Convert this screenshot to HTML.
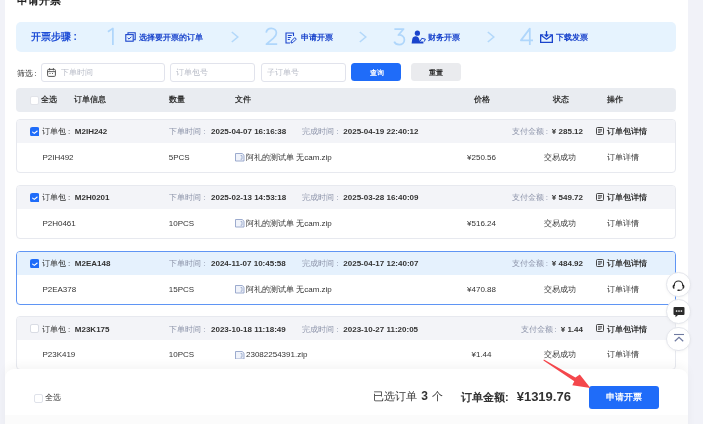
<!DOCTYPE html>
<html><head><meta charset="utf-8">
<style>
*{box-sizing:border-box;margin:0;padding:0}
html,body{width:703px;height:424px;overflow:hidden;background:#f1f2f8;font-family:"Liberation Sans",sans-serif;color:#333}
.a{position:absolute;white-space:nowrap}
#main{position:absolute;left:5px;top:0;width:683px;height:424px;background:#fff}
.t8{font-size:8px;line-height:10px}
.b{font-weight:bold}
.steps{position:absolute;left:16px;top:22px;width:660px;height:30px;background:#e6f3fe;border-radius:5px}
.num{position:absolute;font-size:21px;line-height:21px;color:#bcdcf8;font-weight:300}
.chev{position:absolute;top:31px;width:8px;height:12px}
.stxt{color:#1a44cc;font-weight:bold;font-size:8.3px;line-height:10px}
.inp{position:absolute;top:63px;height:19px;border:1px solid #e1e3ec;border-radius:3px;background:#fff}
.ph{color:#b9bdc8;font-size:8px;line-height:10px}
.card{position:absolute;left:16px;width:660px;height:54px;border:1px solid #e7e9ef;border-radius:4px;background:#fff;overflow:hidden}
.card .hd{position:absolute;left:0;top:0;right:0;height:22.8px;background:#f3f4f8}
.card.sel{border-color:#5f95f4}
.card.sel .hd{background:#e5f1fd}
.cb{position:absolute;width:9px;height:9px;border-radius:2px}
.cb.on{background:#1f6cf9}
.cb.off{background:#fff;border:1px solid #d9dce4}
.gl{color:#8d94aa}
</style></head><body><div style="position:absolute;left:0;top:0;width:703px;height:424px;will-change:transform">
<div id="main"></div>
<!-- title -->
<div class="a b" style="left:17px;top:-6.4px;font-size:10.5px;line-height:12px;color:#222">申请开票</div>

<!-- steps -->
<div class="steps"></div>
<div class="a b" style="left:31px;top:31px;font-size:10px;line-height:12px;color:#1c4cd6">开票步骤<span style="margin-left:2.5px">:</span></div>
<svg class="a" style="left:0;top:0" width="703" height="60" viewBox="0 0 703 60"><g fill="none" stroke="#afd6fb" stroke-width="1.75" stroke-linejoin="round" stroke-linecap="butt">
<path d="M107.9 31.8L112.9 28.4V44.9"/>
<path d="M266.2 32.6C266.6 29.8 268.6 28.3 271.3 28.3C274.3 28.3 276.4 30.3 276.4 32.9C276.4 35.1 275.2 36.6 273.2 38.4L266.4 44.2H277.2"/>
<path d="M394.4 29H403.6L398.4 35C401.9 34.7 404.4 36.8 404.4 39.7C404.4 42.7 402.1 44.6 399.2 44.6C396.8 44.6 395 43.5 394.2 41.6"/>
<path d="M529.8 44.9V28.6L520.9 40.4H533"/>
</g></svg>
<svg class="chev" style="left:231px" viewBox="0 0 8 12"><path d="M0.8 1l6 5-6 5" fill="none" stroke="#b3d8fa" stroke-width="1.6"/></svg>
<svg class="chev" style="left:359px" viewBox="0 0 8 12"><path d="M0.8 1l6 5-6 5" fill="none" stroke="#b3d8fa" stroke-width="1.6"/></svg>
<svg class="chev" style="left:487px" viewBox="0 0 8 12"><path d="M0.8 1l6 5-6 5" fill="none" stroke="#b3d8fa" stroke-width="1.6"/></svg>
<!-- icon1 copy-check -->
<svg class="a" style="left:125px;top:32px" width="11" height="10" viewBox="0 0 11 10"><path d="M3 2.5V0.8h7.2v7H8.5" fill="none" stroke="#1a44cc" stroke-width="1.1"/><rect x="0.8" y="2.6" width="7.4" height="6.6" fill="none" stroke="#1a44cc" stroke-width="1.1"/><path d="M2.6 5.8l1.4 1.3 2.4-2.4" fill="none" stroke="#1a44cc" stroke-width="1"/></svg>
<div class="a stxt" style="left:139px;top:32.3px">选择要开票的订单</div>
<!-- icon2 doc edit -->
<svg class="a" style="left:285px;top:31.5px" width="12" height="12" viewBox="0 0 12 12"><path d="M8.5 4V1H1v10h4" fill="none" stroke="#1a44cc" stroke-width="1.1"/><path d="M2.8 3.5h4M2.8 5.5h3M2.8 7.5h2" stroke="#1a44cc" stroke-width="1"/><path d="M6 11l0.4-2 3.4-3.4 1.5 1.5-3.4 3.4z" fill="none" stroke="#1a44cc" stroke-width="1"/></svg>
<div class="a stxt" style="left:301px;top:32.3px">申请开票</div>
<!-- icon3 person -->
<svg class="a" style="left:411px;top:30px" width="15" height="14" viewBox="0 0 15 14"><circle cx="6.4" cy="3.2" r="2.6" fill="#1a44cc"/><path d="M0.6 13.6L1.3 9C1.6 7.2 3 6.2 4.8 6.2 6.5 6.2 7.6 7.2 8 8.8L9 11.4H12.4V13.6z" fill="#1a44cc"/><path d="M9.3 11L10.8 8.3 14.4 9.2 13.2 11.6" fill="none" stroke="#1a44cc" stroke-width="1"/></svg>
<div class="a stxt" style="left:428px;top:32.3px">财务开票</div>
<!-- icon4 inbox download -->
<svg class="a" style="left:540px;top:31px" width="13" height="12" viewBox="0 0 13 12"><path d="M3.4 3.85H0.65V11.35H12.35V3.85H9.6" fill="none" stroke="#1a44cc" stroke-width="1.3"/><path d="M1 4.3L6.5 8.3 12 4.3" fill="none" stroke="#1a44cc" stroke-width="1.2"/><path d="M6.5 0v5.3M4.6 3.5l1.9 1.9 1.9-1.9" fill="none" stroke="#1a44cc" stroke-width="1.3"/></svg>
<div class="a stxt" style="left:556px;top:32.3px">下载发票</div>

<!-- filter -->
<div class="a t8" style="left:16.7px;top:68.6px;color:#2e2e2e">筛选<span style="margin-left:1.5px">:</span></div>
<div class="inp" style="left:41px;width:123.5px"></div>
<svg class="a" style="left:47px;top:68px" width="9" height="9" viewBox="0 0 9 9"><rect x="0.6" y="1.4" width="7.8" height="7" rx="1" fill="none" stroke="#555" stroke-width="1"/><path d="M0.6 3.6h7.8M2.6 0v2.4M6.4 0v2.4M2.5 5.5h1M5 5.5h1" stroke="#555" stroke-width="0.9"/></svg>
<div class="a ph" style="left:60.5px;top:68px">下单时间</div>
<div class="inp" style="left:170px;width:85px"></div>
<div class="a ph" style="left:176px;top:68px">订单包号</div>
<div class="inp" style="left:261px;width:85px"></div>
<div class="a ph" style="left:267px;top:68px">子订单号</div>
<div class="a" style="left:351.3px;top:63px;width:50.2px;height:18px;background:#1f6cf9;border-radius:3.5px"></div>
<div class="a b" style="left:369.5px;top:67.6px;font-size:7px;line-height:10px;color:#fff">查询</div>
<div class="a" style="left:410.8px;top:63px;width:50px;height:18px;background:#eaebee;border-radius:3.5px"></div>
<div class="a b" style="left:428.5px;top:67.6px;font-size:7px;line-height:10px;color:#2a2a2a">重置</div>

<!-- table header -->
<div class="a" style="left:16px;top:88px;width:660px;height:23.5px;background:#e9ecf1;border-radius:4px"></div>
<div class="cb off" style="left:29.8px;top:96px;border-color:#e1e3e9"></div>
<div class="a t8 b" style="left:41px;top:95px">全选</div>
<div class="a t8 b" style="left:73.5px;top:95px">订单信息</div>
<div class="a t8 b" style="left:169px;top:95px">数量</div>
<div class="a t8 b" style="left:235px;top:95px">文件</div>
<div class="a t8 b" style="left:473.5px;top:95px">价格</div>
<div class="a t8 b" style="left:552.5px;top:95px">状态</div>
<div class="a t8 b" style="left:607px;top:95px">操作</div>

<!--CARDS-->
<div class="card" style="top:119px"><div class="hd"></div></div>
<svg class="a" style="left:29.6px;top:126.9px" width="9.6" height="9.6" viewBox="0 0 10 10"><rect width="10" height="10" rx="2.6" fill="#1f6cf9"/><path d="M2.7 5.3l1.8 1.4 3-2.5" fill="none" stroke="#fff" stroke-width="1.1" stroke-linecap="round"/></svg>
<div class="a t8" style="left:41.6px;top:127.1px">订单包<span style="margin-left:2.5px">:</span></div>
<div class="a t8 b" style="left:74.8px;top:127.1px">M2IH242</div>
<div class="a t8 gl" style="left:168.8px;top:127.1px">下单时间<span style="margin-left:2.5px">:</span></div>
<div class="a t8 b" style="left:211px;top:127.1px">2025-04-07 16:16:38</div>
<div class="a t8 gl" style="left:302px;top:127.1px">完成时间<span style="margin-left:2.5px">:</span></div>
<div class="a t8 b" style="left:343.3px;top:127.1px">2025-04-19 22:40:12</div>
<div class="a t8" style="right:120px;top:127.1px"><span class="gl">支付金额<span style="margin-left:1.5px">:</span></span><b style="margin-left:4px">¥ 285.12</b></div>
<svg class="a" style="left:596.3px;top:126.69999999999999px" width="8" height="8" viewBox="0 0 8 8"><rect x="0.5" y="0.5" width="7" height="7" rx="1" fill="none" stroke="#333" stroke-width="0.9"/><path d="M2 2.6h4M2 4h4M2 5.4h2.5" stroke="#333" stroke-width="0.8"/></svg>
<div class="a t8 b" style="left:606.6px;top:127.1px">订单包详情</div>
<div class="a t8" style="left:42.4px;top:152.5px">P2IH492</div>
<div class="a t8" style="left:168.8px;top:152.5px">5PCS</div>
<svg class="a" style="left:235px;top:153.2px" width="9.5" height="8.5" viewBox="0 0 9.5 8.5"><path d="M0.5 0.5H7.2L9 2.2V8H0.5z" fill="#f0f3fa" stroke="#91a2c8" stroke-width="0.9"/><path d="M5.6 2.6H7V6.2H5.6" fill="none" stroke="#91a2c8" stroke-width="0.8"/></svg>
<div class="a t8" style="left:246px;top:152.5px">阿礼的测试单 无cam.zip</div>
<div class="a t8" style="left:431.5px;width:100px;text-align:center;top:152.5px">¥250.56</div>
<div class="a t8" style="left:510px;width:100px;text-align:center;top:152.5px">交易成功</div>
<div class="a t8" style="left:607.2px;top:152.5px">订单详情</div>
<div class="card" style="top:185px"><div class="hd"></div></div>
<svg class="a" style="left:29.6px;top:192.9px" width="9.6" height="9.6" viewBox="0 0 10 10"><rect width="10" height="10" rx="2.6" fill="#1f6cf9"/><path d="M2.7 5.3l1.8 1.4 3-2.5" fill="none" stroke="#fff" stroke-width="1.1" stroke-linecap="round"/></svg>
<div class="a t8" style="left:41.6px;top:193.1px">订单包<span style="margin-left:2.5px">:</span></div>
<div class="a t8 b" style="left:74.8px;top:193.1px">M2H0201</div>
<div class="a t8 gl" style="left:168.8px;top:193.1px">下单时间<span style="margin-left:2.5px">:</span></div>
<div class="a t8 b" style="left:211px;top:193.1px">2025-02-13 14:53:18</div>
<div class="a t8 gl" style="left:302px;top:193.1px">完成时间<span style="margin-left:2.5px">:</span></div>
<div class="a t8 b" style="left:343.3px;top:193.1px">2025-03-28 16:40:09</div>
<div class="a t8" style="right:120px;top:193.1px"><span class="gl">支付金额<span style="margin-left:1.5px">:</span></span><b style="margin-left:4px">¥ 549.72</b></div>
<svg class="a" style="left:596.3px;top:192.7px" width="8" height="8" viewBox="0 0 8 8"><rect x="0.5" y="0.5" width="7" height="7" rx="1" fill="none" stroke="#333" stroke-width="0.9"/><path d="M2 2.6h4M2 4h4M2 5.4h2.5" stroke="#333" stroke-width="0.8"/></svg>
<div class="a t8 b" style="left:606.6px;top:193.1px">订单包详情</div>
<div class="a t8" style="left:42.4px;top:218.5px">P2H0461</div>
<div class="a t8" style="left:168.8px;top:218.5px">10PCS</div>
<svg class="a" style="left:235px;top:219.2px" width="9.5" height="8.5" viewBox="0 0 9.5 8.5"><path d="M0.5 0.5H7.2L9 2.2V8H0.5z" fill="#f0f3fa" stroke="#91a2c8" stroke-width="0.9"/><path d="M5.6 2.6H7V6.2H5.6" fill="none" stroke="#91a2c8" stroke-width="0.8"/></svg>
<div class="a t8" style="left:246px;top:218.5px">阿礼的测试单 无cam.zip</div>
<div class="a t8" style="left:431.5px;width:100px;text-align:center;top:218.5px">¥516.24</div>
<div class="a t8" style="left:510px;width:100px;text-align:center;top:218.5px">交易成功</div>
<div class="a t8" style="left:607.2px;top:218.5px">订单详情</div>
<div class="card sel" style="top:251px"><div class="hd"></div></div>
<svg class="a" style="left:29.6px;top:258.9px" width="9.6" height="9.6" viewBox="0 0 10 10"><rect width="10" height="10" rx="2.6" fill="#1f6cf9"/><path d="M2.7 5.3l1.8 1.4 3-2.5" fill="none" stroke="#fff" stroke-width="1.1" stroke-linecap="round"/></svg>
<div class="a t8" style="left:41.6px;top:259.09999999999997px">订单包<span style="margin-left:2.5px">:</span></div>
<div class="a t8 b" style="left:74.8px;top:259.09999999999997px">M2EA148</div>
<div class="a t8 gl" style="left:168.8px;top:259.09999999999997px">下单时间<span style="margin-left:2.5px">:</span></div>
<div class="a t8 b" style="left:211px;top:259.09999999999997px">2024-11-07 10:45:58</div>
<div class="a t8 gl" style="left:302px;top:259.09999999999997px">完成时间<span style="margin-left:2.5px">:</span></div>
<div class="a t8 b" style="left:343.3px;top:259.09999999999997px">2025-04-17 12:40:07</div>
<div class="a t8" style="right:120px;top:259.09999999999997px"><span class="gl">支付金额<span style="margin-left:1.5px">:</span></span><b style="margin-left:4px">¥ 484.92</b></div>
<svg class="a" style="left:596.3px;top:258.7px" width="8" height="8" viewBox="0 0 8 8"><rect x="0.5" y="0.5" width="7" height="7" rx="1" fill="none" stroke="#333" stroke-width="0.9"/><path d="M2 2.6h4M2 4h4M2 5.4h2.5" stroke="#333" stroke-width="0.8"/></svg>
<div class="a t8 b" style="left:606.6px;top:259.09999999999997px">订单包详情</div>
<div class="a t8" style="left:42.4px;top:284.5px">P2EA378</div>
<div class="a t8" style="left:168.8px;top:284.5px">15PCS</div>
<svg class="a" style="left:235px;top:285.2px" width="9.5" height="8.5" viewBox="0 0 9.5 8.5"><path d="M0.5 0.5H7.2L9 2.2V8H0.5z" fill="#f0f3fa" stroke="#91a2c8" stroke-width="0.9"/><path d="M5.6 2.6H7V6.2H5.6" fill="none" stroke="#91a2c8" stroke-width="0.8"/></svg>
<div class="a t8" style="left:246px;top:284.5px">阿礼的测试单 无cam.zip</div>
<div class="a t8" style="left:431.5px;width:100px;text-align:center;top:284.5px">¥470.88</div>
<div class="a t8" style="left:510px;width:100px;text-align:center;top:284.5px">交易成功</div>
<div class="a t8" style="left:607.2px;top:284.5px">订单详情</div>
<div class="card" style="top:316.4px"><div class="hd"></div></div>
<div class="cb off" style="left:29.7px;top:324.29999999999995px"></div>
<div class="a t8" style="left:41.6px;top:324.49999999999994px">订单包<span style="margin-left:2.5px">:</span></div>
<div class="a t8 b" style="left:74.8px;top:324.49999999999994px">M23K175</div>
<div class="a t8 gl" style="left:168.8px;top:324.49999999999994px">下单时间<span style="margin-left:2.5px">:</span></div>
<div class="a t8 b" style="left:211px;top:324.49999999999994px">2023-10-18 11:18:49</div>
<div class="a t8 gl" style="left:302px;top:324.49999999999994px">完成时间<span style="margin-left:2.5px">:</span></div>
<div class="a t8 b" style="left:343.3px;top:324.49999999999994px">2023-10-27 11:20:05</div>
<div class="a t8" style="right:120px;top:324.49999999999994px"><span class="gl">支付金额<span style="margin-left:1.5px">:</span></span><b style="margin-left:4px">¥ 1.44</b></div>
<svg class="a" style="left:596.3px;top:324.09999999999997px" width="8" height="8" viewBox="0 0 8 8"><rect x="0.5" y="0.5" width="7" height="7" rx="1" fill="none" stroke="#333" stroke-width="0.9"/><path d="M2 2.6h4M2 4h4M2 5.4h2.5" stroke="#333" stroke-width="0.8"/></svg>
<div class="a t8 b" style="left:606.6px;top:324.49999999999994px">订单包详情</div>
<div class="a t8" style="left:42.4px;top:349.9px">P23K419</div>
<div class="a t8" style="left:168.8px;top:349.9px">10PCS</div>
<svg class="a" style="left:235px;top:350.59999999999997px" width="9.5" height="8.5" viewBox="0 0 9.5 8.5"><path d="M0.5 0.5H7.2L9 2.2V8H0.5z" fill="#f0f3fa" stroke="#91a2c8" stroke-width="0.9"/><path d="M5.6 2.6H7V6.2H5.6" fill="none" stroke="#91a2c8" stroke-width="0.8"/></svg>
<div class="a t8" style="left:246px;top:349.9px">23082254391.zip</div>
<div class="a t8" style="left:431.5px;width:100px;text-align:center;top:349.9px">¥1.44</div>
<div class="a t8" style="left:510px;width:100px;text-align:center;top:349.9px">交易成功</div>
<div class="a t8" style="left:607.2px;top:349.9px">订单详情</div>
<!--/CARDS-->


<!-- float buttons -->
<div class="a" style="left:666.2px;top:272.2px;width:24.6px;height:24.6px;border-radius:50%;background:#fff;border:1px solid #e4e6ec;box-shadow:0 1px 3px rgba(0,0,0,0.04)"></div>
<svg class="a" style="left:672px;top:278.5px" width="13" height="13" viewBox="0 0 13 13"><path d="M2.3 7V6.2a4.2 4.2 0 0 1 8.4 0V7" fill="none" stroke="#2a2a2a" stroke-width="1.1"/><path d="M2.4 5.6v4.2C1.3 9.8 0.6 8.9 0.6 7.7s0.7-2.1 1.8-2.1z" fill="#2a2a2a"/><path d="M10.6 5.6v4.2c1.1 0 1.8-0.9 1.8-2.1s-0.7-2.1-1.8-2.1z" fill="#2a2a2a"/><path d="M10.6 9.6c-0.3 1.2-1.3 1.7-3.2 1.7" fill="none" stroke="#2a2a2a" stroke-width="0.9"/><rect x="5.4" y="10.6" width="2.4" height="1.4" rx="0.6" fill="#2a2a2a"/></svg>
<div class="a" style="left:666.2px;top:299px;width:24.6px;height:24.6px;border-radius:50%;background:#fff;border:1px solid #e4e6ec;box-shadow:0 1px 3px rgba(0,0,0,0.04)"></div>
<svg class="a" style="left:672.5px;top:305.5px" width="12" height="12" viewBox="0 0 12 12"><path d="M1.5 1h9a1 1 0 0 1 1 1v6a1 1 0 0 1-1 1H5l-2.5 2.3V9h-1a1 1 0 0 1-1-1V2a1 1 0 0 1 1-1z" fill="#2a2a2a"/><circle cx="3.6" cy="5" r="0.85" fill="#fff"/><circle cx="6" cy="5" r="0.85" fill="#fff"/><circle cx="8.4" cy="5" r="0.85" fill="#fff"/></svg>
<div class="a" style="left:666.2px;top:326.5px;width:24.6px;height:24.6px;border-radius:50%;background:#fff;border:1px solid #e4e6ec;box-shadow:0 1px 3px rgba(0,0,0,0.04)"></div>
<svg class="a" style="left:672.5px;top:332.5px" width="12" height="12" viewBox="0 0 12 12"><path d="M1 1.5h10" stroke="#6f7aa0" stroke-width="1.1"/><path d="M1.8 8.3L6 4.3l4.2 4" fill="none" stroke="#6f7aa0" stroke-width="1.2"/></svg>

<!-- bottom bar -->
<div class="a" style="left:5px;top:368.5px;width:683px;height:70px;background:#fff;border-radius:9px;box-shadow:0 -4px 10px rgba(0,0,0,0.04)"></div>
<div class="a" style="left:5px;top:415px;width:683px;height:9px;background:#fbfbfb"></div>
<div class="cb off" style="left:34px;top:393.5px;border-color:#dfe2ea"></div>
<div class="a t8" style="left:44.8px;top:392.5px">全选</div>
<div class="a" style="left:372.8px;top:389.3px;font-size:11px;line-height:14px;color:#333">已选订单<b style="font-size:12px;margin-left:4.5px">3</b><span style="margin-left:4.5px">个</span></div>
<div class="a b" style="left:461px;top:388.5px;font-size:11px;line-height:16px;color:#333">订单金额:<span style="font-size:13px;margin-left:8px">¥1319.76</span></div>
<div class="a" style="left:589px;top:386px;width:70px;height:22.5px;background:#1f6cf9;border-radius:3px"></div>
<div class="a b" style="left:606px;top:392px;font-size:8.8px;line-height:11px;color:#fff">申请开票</div>

<!-- red arrow -->
<svg class="a" style="left:0;top:0" width="703" height="424" viewBox="0 0 703 424"><path d="M543.9 359.6L575.4 377.5 579.8 374.4 590.4 387.9 572.3 385.2 574.3 381.2 543.4 360.6z" fill="#f4474c"/></svg>
</div></body></html>
